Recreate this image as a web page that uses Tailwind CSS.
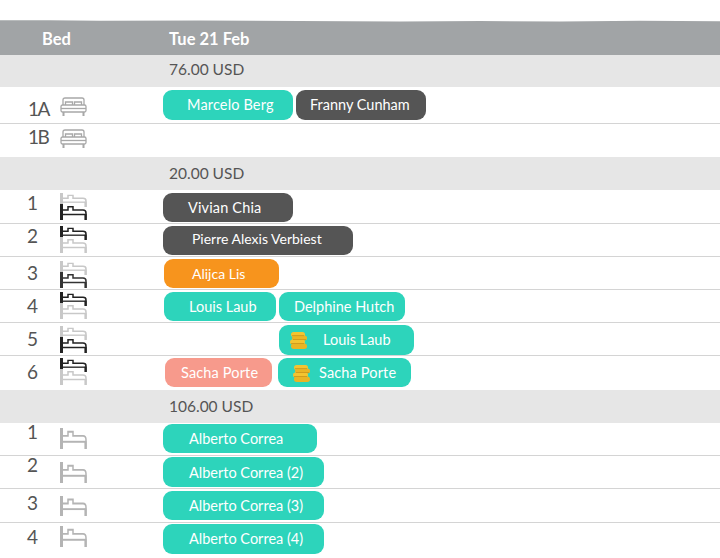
<!DOCTYPE html>
<html lang="en">
<head>
<meta charset="UTF-8">
<title>Bed planning</title>
<script src="https://cdn.jsdelivr.net/npm/@tailwindcss/browser@4"></script>
</head>
<body class="bg-white font-['Lato','Liberation_Sans',sans-serif] text-[#555]">
<svg class="hidden">
  <symbol id="dbl" viewBox="0 0 27 19" preserveAspectRatio="none" fill="none" stroke="currentColor" stroke-width="1.3">
    <path d="M3 8V3Q3 1 5 1H22Q24 1 24 3V8"/>
    <path d="M5.500 8V5H12.500V8M14.500 8V5H21.500V8"/>
    <rect x="1" y="8" width="25" height="7" rx="1.500"/>
    <path d="M1 11.500H26"/>
    <path d="M3.500 15V19M23.500 15V19" stroke-width="2"/>
  </symbol>
  <symbol id="sgl" viewBox="0 0 27 16" preserveAspectRatio="none" fill="none" stroke="currentColor">
    <path d="M1.500 0V16" stroke-width="3"/>
    <path d="M3 6H8V2.800H13V6H23Q26 6 26 9V16" stroke-width="1.500"/>
    <path d="M3 10.500H26" stroke-width="1.500"/>
    <path d="M25.500 10V16" stroke-width="2.200"/>
  </symbol>
  <symbol id="coin" viewBox="0 0 17 17" preserveAspectRatio="none">
    <rect x="1" y="0" width="14" height="5" rx="2.500" fill="#f3c430"/>
    <rect x="2" y="3.500" width="15" height="5" rx="2.500" fill="#eab524"/>
    <rect x="0" y="7.500" width="15" height="5" rx="2.500" fill="#f3c430"/>
    <rect x="1" y="11.500" width="16" height="5.500" rx="2.700" fill="#eab524"/>
    <path d="M2 3.600H14M3 7.500H16M1 11.500H14" stroke="#c9941a" stroke-width=".8"/>
  </symbol>
</svg>

<div class="h-[20px]"></div>

<!-- header -->
<div class="relative h-[35px] bg-[#a1a4a6] flex items-center pt-[3px] text-white font-bold text-[16.5px]">
  <span class="ml-[42px] w-[127px]">Bed</span>
  <span>Tue 21 Feb</span>
  <svg class="absolute left-0 top-0 w-[720px] h-[2px]" viewBox="0 0 720 2"><path d="M0 0H720V1.200L640 .8 560 1.400 480 1 400 1.500 300 1 200 .6 100 .8 50 .3 0 .3Z" fill="#fff"/></svg>
</div>

<!-- 76 USD -->
<div class="h-[32px] bg-[#e6e6e6] flex items-center pl-[169px] pb-[2px] text-[15.5px]">76.00 USD</div>
<div class="h-[37px] border-b border-[#d4d4d4] flex items-start">
  <span class="w-[60px] pl-[28px] pt-[9px] text-[19px] leading-[26px] tracking-[-1.500px]">1A</span>
  <svg class="w-[27px] h-[19px] mt-[10px] text-[#a8a8a8]"><use href="#dbl"/></svg>
  <a class="ml-[76px] mt-[3px] w-[130px] h-[30px] rounded-[9px] bg-[#2dd4bb] text-white text-[14.500px] tracking-[0.150px] pb-[1px] flex items-center pl-[24px]">Marcelo Berg</a>
  <a class="ml-[3px] mt-[3px] w-[130px] h-[30px] rounded-[9px] bg-[#555] text-white text-[14.500px] pb-[1px] flex items-center pl-[14px]">Franny Cunham</a>
</div>
<div class="h-[33px] flex items-start">
  <span class="w-[60px] pl-[28px] text-[19px] leading-[26px] tracking-[-1.500px]">1B</span>
  <svg class="w-[27px] h-[19px] mt-[5px] text-[#a8a8a8]"><use href="#dbl"/></svg>
</div>

<!-- 20 USD -->
<div class="h-[33px] bg-[#e6e6e6] flex items-center pl-[169px] pt-[1px] text-[15.5px]">20.00 USD</div>
<div class="h-[34px] border-b border-[#d4d4d4] flex items-start">
  <span class="w-[60px] pl-[27px] text-[19px] leading-[26px]">1</span>
  <div class="w-[27px] mt-[3px] flex flex-col"><svg class="w-[27px] h-[14px] text-[#c8c8c8]"><use href="#sgl"/></svg><svg class="w-[27px] h-[16px] -mt-[3px] text-[#222]"><use href="#sgl"/></svg></div>
  <a class="ml-[76px] mt-[3px] w-[130px] h-[29px] rounded-[9px] bg-[#555] text-white text-[14.500px] tracking-[0.150px] flex items-center pl-[25px]">Vivian Chia</a>
</div>
<div class="h-[33px] border-b border-[#d4d4d4] flex items-start">
  <span class="w-[60px] pl-[27px] text-[19px] leading-[24px]">2</span>
  <div class="w-[27px] mt-[2px] flex flex-col"><svg class="w-[27px] h-[14px] text-[#222]"><use href="#sgl"/></svg><svg class="w-[27px] h-[16px] -mt-[3px] text-[#c8c8c8]"><use href="#sgl"/></svg></div>
  <a class="ml-[76px] mt-[2px] w-[190px] h-[29px] rounded-[9px] bg-[#555] text-white text-[14px] pb-[5px] flex items-center pl-[29px]">Pierre Alexis Verbiest</a>
</div>
<div class="h-[33px] border-b border-[#d4d4d4] flex items-start">
  <span class="w-[60px] pl-[27px] pt-[3px] text-[19px] leading-[26px]">3</span>
  <div class="w-[27px] mt-[4px] flex flex-col"><svg class="w-[27px] h-[14px] text-[#c8c8c8]"><use href="#sgl"/></svg><svg class="w-[27px] h-[16px] -mt-[3px] text-[#333]"><use href="#sgl"/></svg></div>
  <a class="ml-[77px] mt-[2px] w-[115px] h-[29px] rounded-[9px] bg-[#f7941d] text-white text-[14px] flex items-center pl-[28px]">Alijca Lis</a>
</div>
<div class="h-[33px] border-b border-[#d4d4d4] flex items-start">
  <span class="w-[60px] pl-[27px] pt-[3px] text-[19px] leading-[26px]">4</span>
  <div class="w-[27px] mt-[2px] flex flex-col"><svg class="w-[27px] h-[14px] text-[#222]"><use href="#sgl"/></svg><svg class="w-[27px] h-[16px] -mt-[3px] text-[#c8c8c8]"><use href="#sgl"/></svg></div>
  <a class="ml-[77px] mt-[2px] w-[112px] h-[29px] rounded-[9px] bg-[#2dd4bb] text-white text-[14.500px] flex items-center pl-[25px]">Louis Laub</a>
  <a class="ml-[3px] mt-[2px] w-[126px] h-[29px] rounded-[9px] bg-[#2dd4bb] text-white text-[14.500px] flex items-center pl-[15px]">Delphine Hutch</a>
</div>
<div class="h-[33px] border-b border-[#d4d4d4] flex items-start">
  <span class="w-[60px] pl-[27px] pt-[3px] text-[19px] leading-[26px]">5</span>
  <div class="w-[27px] mt-[3px] flex flex-col"><svg class="w-[27px] h-[14px] text-[#c8c8c8]"><use href="#sgl"/></svg><svg class="w-[27px] h-[16px] -mt-[3px] text-[#222]"><use href="#sgl"/></svg></div>
  <a class="ml-[192px] mt-[2px] w-[135px] h-[30px] rounded-[9px] bg-[#2dd4bb] text-white text-[14.500px] flex items-center pl-[11px]"><svg class="w-[17px] h-[17px] mr-[16px]"><use href="#coin"/></svg><span class="-mt-[1px]">Louis Laub</span></a>
</div>
<div class="h-[34px] flex items-start">
  <span class="w-[60px] pl-[27px] pt-[3px] text-[19px] leading-[26px]">6</span>
  <div class="w-[27px] mt-[2px] flex flex-col"><svg class="w-[27px] h-[14px] text-[#222]"><use href="#sgl"/></svg><svg class="w-[27px] h-[16px] -mt-[3px] text-[#c8c8c8]"><use href="#sgl"/></svg></div>
  <a class="ml-[78px] mt-[2px] w-[107px] h-[29px] rounded-[9px] bg-[#f79a8c] text-white text-[14.500px] tracking-[0.150px] flex items-center pl-[16px]">Sacha Porte</a>
  <a class="ml-[6px] mt-[2px] w-[133px] h-[29px] rounded-[9px] bg-[#2dd4bb] text-white text-[14.500px] tracking-[0.150px] flex items-center pl-[15px]"><svg class="w-[17px] h-[17px] mt-[1px] mr-[9px]"><use href="#coin"/></svg><span class="-mt-[0px]">Sacha Porte</span></a>
</div>

<!-- 106 USD -->
<div class="h-[33px] bg-[#e6e6e6] flex items-center pl-[169px] pt-[1px] text-[15.5px]">106.00 USD</div>
<div class="h-[33px] border-b border-[#d4d4d4] flex items-start">
  <span class="w-[60px] pl-[27px] text-[19px] leading-[18px]">1</span>
  <svg class="w-[27px] h-[21px] mt-[5px] text-[#b4b4b4]"><use href="#sgl"/></svg>
  <a class="ml-[76px] mt-[1px] w-[154px] h-[29px] rounded-[9px] bg-[#2dd4bb] text-white text-[14.500px] flex items-center pl-[26px]">Alberto Correa</a>
</div>
<div class="h-[33px] border-b border-[#d4d4d4] flex items-start">
  <span class="w-[60px] pl-[27px] text-[19px] leading-[18px]">2</span>
  <svg class="w-[27px] h-[21px] mt-[6px] text-[#b4b4b4]"><use href="#sgl"/></svg>
  <a class="ml-[76px] mt-[1px] w-[161px] h-[30px] rounded-[9px] bg-[#2dd4bb] text-white text-[14.500px] pt-[1px] flex items-center pl-[26px]">Alberto Correa (2)</a>
</div>
<div class="h-[34px] border-b border-[#d4d4d4] flex items-start">
  <span class="w-[60px] pl-[27px] pt-[1px] text-[19px] leading-[26px]">3</span>
  <svg class="w-[27px] h-[20px] mt-[7px] text-[#b4b4b4]"><use href="#sgl"/></svg>
  <a class="ml-[76px] mt-[2px] w-[161px] h-[29px] rounded-[9px] bg-[#2dd4bb] text-white text-[14.500px] flex items-center pl-[26px]">Alberto Correa (3)</a>
</div>
<div class="h-[32px] flex items-start">
  <span class="w-[60px] pl-[27px] pt-[1px] text-[19px] leading-[26px]">4</span>
  <svg class="w-[27px] h-[21px] mt-[3px] text-[#b4b4b4]"><use href="#sgl"/></svg>
  <a class="ml-[76px] mt-[1px] w-[161px] h-[30px] rounded-[9px] bg-[#2dd4bb] text-white text-[14.500px] flex items-center pl-[26px]">Alberto Correa (4)</a>
</div>
</body>
</html>
